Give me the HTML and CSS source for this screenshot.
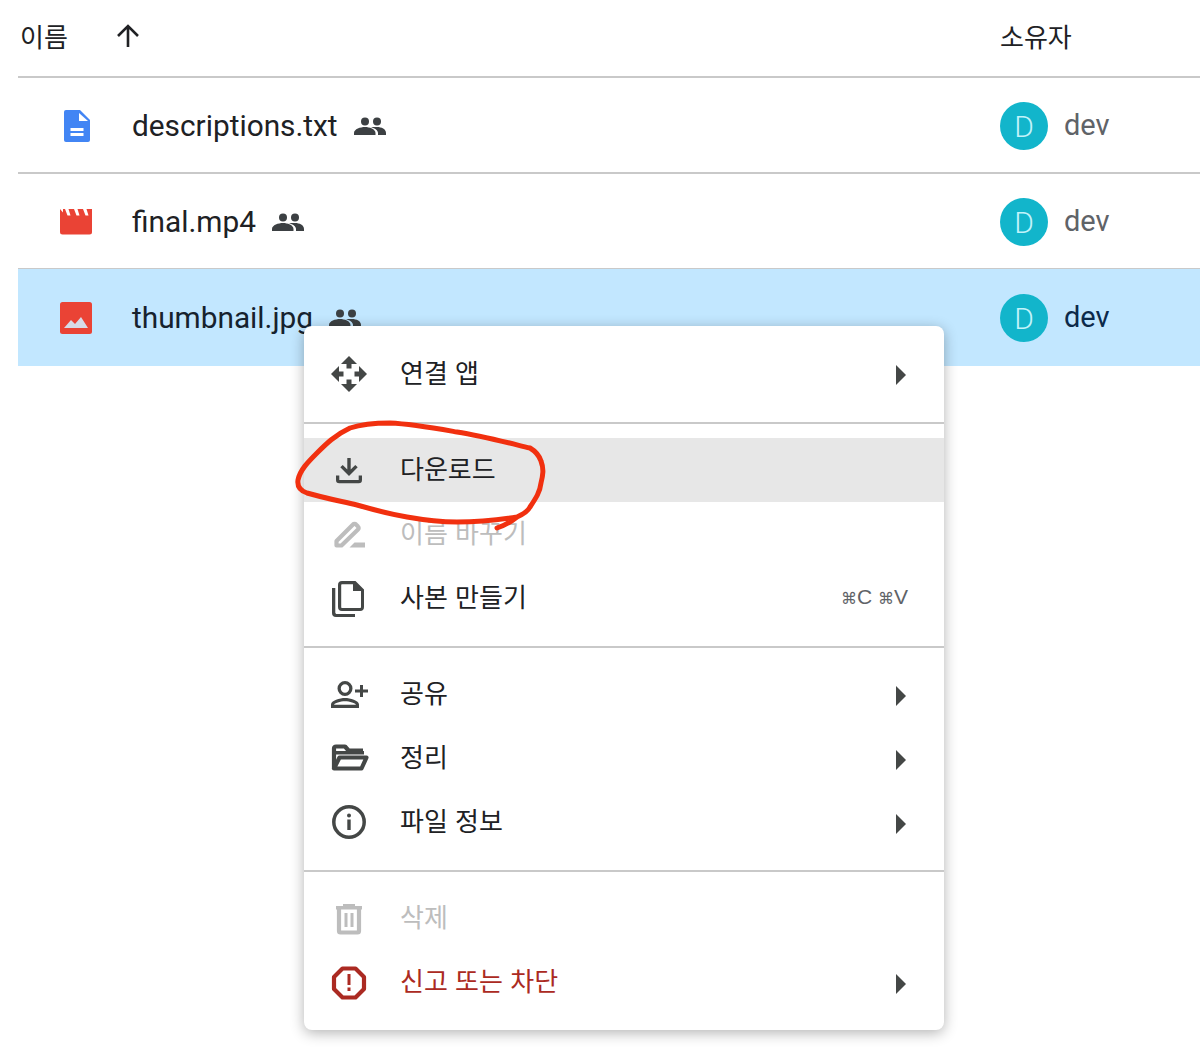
FILE: index.html
```html
<!DOCTYPE html>
<html lang="ko">
<head>
<meta charset="utf-8">
<title>Drive</title>
<link rel="stylesheet" href="styles.css">
</head>
<body>
<div class="page">
  <div class="list">
    <div class="head">
      <div class="col-name">
        <span class="head-label">이름</span>
        <svg class="sort" viewBox="0 0 24 24"><path d="M12 23V2M2 12 12 2l10 10"/></svg>
      </div>
      <div class="col-owner head-owner">소유자</div>
    </div>

    <div class="row">
      <div class="col-name">
        <span class="file-icon">
          <svg viewBox="0 0 32 32" width="32" height="32"><path class="blue" d="M6 0h14l10 10v20a2 2 0 0 1-2 2H6a2 2 0 0 1-2-2V2a2 2 0 0 1 2-2z"/><path class="cut" d="M19 3v8h9zM10.500 18h13v3h-13zM10.500 23h13v3h-13z"/></svg>
        </span>
        <span class="file-name">descriptions.txt</span>
        <svg class="people" viewBox="0 0 32 18"><circle cx="11" cy="4.500" r="4"/><circle cx="23" cy="4.500" r="4"/><path d="M0 18v-2c0-4 6.500-6 11-6s10.500 2 10.500 6v2zM17 10.300c1.800-.3 4-.4 6-.3 4.500 0 9 2 9 6v2h-8v-2c0-2.500-3-4.700-7-5.700z"/></svg>
      </div>
      <div class="col-owner owner"><span class="avatar">D</span><span class="owner-name">dev</span></div>
    </div>

    <div class="row">
      <div class="col-name">
        <span class="file-icon">
          <svg viewBox="0 0 32 26" width="32" height="26"><path class="red" d="M0 0h32v23a2.500 2.500 0 0 1-2.500 2.500h-27A2.500 2.500 0 0 1 0 23z"/><path class="cut" d="M0 0h3v3.500zM5 0h3.500l2 6.500h-3zM14 0h3.500l2 6.500h-3zM23 0h3.500l2 6.500h-3z"/></svg>
        </span>
        <span class="file-name">final.mp4</span>
        <svg class="people" viewBox="0 0 32 18"><circle cx="11" cy="4.500" r="4"/><circle cx="23" cy="4.500" r="4"/><path d="M0 18v-2c0-4 6.500-6 11-6s10.500 2 10.500 6v2zM17 10.300c1.800-.3 4-.4 6-.3 4.500 0 9 2 9 6v2h-8v-2c0-2.500-3-4.700-7-5.700z"/></svg>
      </div>
      <div class="col-owner owner"><span class="avatar">D</span><span class="owner-name">dev</span></div>
    </div>

    <div class="row selected">
      <div class="col-name">
        <span class="file-icon">
          <svg viewBox="0 0 32 32" width="32" height="32"><rect class="red" width="32" height="32" rx="2.500"/><path class="mountain" d="M4 26l7-8 4 4 6-7 7 11z"/></svg>
        </span>
        <span class="file-name">thumbnail.jpg</span>
        <svg class="people" viewBox="0 0 32 18"><circle cx="11" cy="4.500" r="4"/><circle cx="23" cy="4.500" r="4"/><path d="M0 18v-2c0-4 6.500-6 11-6s10.500 2 10.500 6v2zM17 10.300c1.800-.3 4-.4 6-.3 4.500 0 9 2 9 6v2h-8v-2c0-2.500-3-4.700-7-5.700z"/></svg>
      </div>
      <div class="col-owner owner"><span class="avatar">D</span><span class="owner-name">dev</span></div>
    </div>
  </div>

  <div class="menu">
    <div class="group first">
      <div class="item">
        <svg class="icon" viewBox="0 0 40 40"><path d="M20 3l8 8h-5.500v4.500h-5V11H12zM20 39l-8-8h5.500v-4.500h5V31H28zM2 21l8-8v5.500h4.500v5H10V29zM38 21l-8 8v-5.500h-4.500v-5H30V13z"/></svg>
        <span class="label top">연결 앱</span>
        <span class="caret"></span>
      </div>
    </div>
    <div class="group">
      <div class="item hover">
        <svg class="icon" viewBox="0 0 40 40"><path d="M18.300 8h3.400v11.500l4.600-4.600 2.400 2.400L20 26l-8.700-8.700 2.400-2.400 4.600 4.600z"/><path d="M7 25.500h3.300V30h19.400v-4.500H33V30a3.300 3.300 0 0 1-3.300 3.300H10.300A3.300 3.300 0 0 1 7 30z"/></svg>
        <span class="label">다운로드</span>
      </div>
      <div class="item disabled">
        <svg class="icon" viewBox="0 0 40 40"><path class="line thick" d="M7.500 31.500v-4.500L24 10.500a2 2 0 0 1 3 0l2 2a2 2 0 0 1 0 3L12.500 31.500z"/><path d="M20.500 33.500l5-5H36v5z"/></svg>
        <span class="label">이름 바꾸기</span>
      </div>
      <div class="item">
        <svg class="icon" viewBox="0 0 40 40"><path d="M3 10h3.300v24.500c0 .8.700 1.500 1.500 1.500H26v3H7a4 4 0 0 1-4-4z"/><path fill-rule="evenodd" d="M13 3h13.500L35 11.500V29a4 4 0 0 1-4 4H13a4 4 0 0 1-4-4V7a4 4 0 0 1 4-4zm0 3.200a.8.800 0 0 0-.8.800v22c0 .6.400 1 1 1H31c.6 0 1-.4 1-1V13h-8V6.200z"/></svg>
        <span class="label">사본 만들기</span>
        <span class="shortcut"><span class="cmd">⌘</span>C <span class="cmd">⌘</span>V</span>
      </div>
    </div>
    <div class="group">
      <div class="item">
        <svg class="icon" viewBox="0 0 40 40"><path fill-rule="evenodd" d="M16 7a7.500 7.500 0 1 1 0 15 7.500 7.500 0 0 1 0-15zm0 3.300a4.200 4.200 0 1 0 0 8.400 4.200 4.200 0 0 0 0-8.400zM16 24c5 0 14 2.500 14 6.500V34H2v-3.500C2 26.500 11 24 16 24zm0 3.200c-4.500 0-10.800 2-10.800 3.300v.3h21.600v-.3c0-1.300-6.300-3.300-10.800-3.300z"/><path d="M31 11h3v4.500h5v3h-5V23h-3v-4.500h-5v-3h5z"/></svg>
        <span class="label">공유</span>
        <span class="caret"></span>
      </div>
      <div class="item">
        <svg class="icon" viewBox="0 0 40 40"><path d="M5 13h30v3.500H5z"/><path class="line thick" d="M5 31V10.500a2 2 0 0 1 2-2h9l3.500 4H34"/><path class="line thick" d="M10.500 19.500H37.500L32.500 30.500H5z"/></svg>
        <span class="label">정리</span>
        <span class="caret"></span>
      </div>
      <div class="item">
        <svg class="icon" viewBox="0 0 40 40"><circle class="line" cx="20" cy="20" r="15.200"/><circle cx="20" cy="13.500" r="2"/><path d="M18.300 17.500h3.400V28h-3.400z"/></svg>
        <span class="label">파일 정보</span>
        <span class="caret"></span>
      </div>
    </div>
    <div class="group last">
      <div class="item disabled">
        <svg class="icon" viewBox="0 0 40 40"><path d="M14 6h12v2h7v3.500H7V8h7z"/><path class="line thick" d="M10 11v22a1.500 1.500 0 0 0 1.500 1.500h17a1.500 1.500 0 0 0 1.500-1.500V11"/><path d="M15.500 15h3v14h-3zM21.500 15h3v14h-3z"/></svg>
        <span class="label">삭제</span>
      </div>
      <div class="item report">
        <svg class="icon" viewBox="0 0 40 40"><path class="line thick" d="M13.500 6.500h13L35 15v12l-8.500 8.500h-13L5 27V15z"/><path d="M18.500 12h3v11h-3zM18.500 25.500h3V29h-3z"/></svg>
        <span class="label">신고 또는 차단</span>
        <span class="caret"></span>
      </div>
    </div>
  </div>

  <svg class="scribble" viewBox="0 0 1200 1064"><path d="M497 528C506 525 512 521 517 517C524 514 528 511 530 507C536 498 540 492 541 483C543 475 544 469 541 461C539 455 535 451 530 448C505 442 482 436 457 432C434 428 412 424 390 423C374 423 362 424 350 428C335 435 326 444 317 453C308 462 300 470 298 480C297 487 301 491 307 493C324 498 340 501 357 505C374 510 390 514 407 517C424 520 440 522 457 522C478 522 498 520 517 517"/></svg>
</div>
</body>
</html>
```
FILE: styles.css
```css
* { box-sizing: border-box; }
html, body { margin: 0; padding: 0; background: #fff; }
body { font-family: Roboto, "Noto Sans CJK KR", sans-serif; color: #202124; }
.page { position: relative; width: 1200px; height: 1064px; overflow: hidden; }
.list { margin-left: 18px; }
.head, .row { display: flex; align-items: center; border-bottom: 2px solid #c9c9c9; }
.head { height: 78px; padding-bottom: 4px; }
.row { height: 96px; padding-top: 2px; }
.row.selected { height: 97px; padding-top: 1px; border-bottom: 0; background: #c2e7ff; margin-top: -1px; color: #16222e; }
.col-name { width: 982px; display: flex; align-items: center; }
.col-owner { flex: 1; display: flex; align-items: center; }
.head-label, .head-owner { font-family: "Noto Sans CJK KR", sans-serif; font-size: 26px; line-height: 32px; }
.head-label { margin-left: 2px; width: 96px; }
.sort { width: 24px; height: 24px; }
.sort path { fill: none; stroke: #202124; stroke-width: 2.6; }
.file-icon { width: 32px; height: 32px; margin: 0 40px 0 42px; display: flex; align-items: center; }
.file-icon svg { display: block; }
.blue { fill: #4285f4; }
.red { fill: #ea4335; }
.cut { fill: #fff; }
.mountain { fill: #d7dbe8; }
.file-name { font-size: 29.800px; line-height: 36px; }
.people { width: 32px; height: 18px; margin-left: 16px; fill: #3c4043; }
.avatar { width: 48px; height: 48px; border-radius: 50%; background: #12b5cb; color: #c2f3fa; font-size: 30px; font-weight: 300; display: flex; align-items: center; justify-content: center; }
.owner-name { margin: -2px 0 0 16px; font-size: 29px; color: #5f6368; }
.selected .owner-name { color: #0c2a4a; }
.menu { position: absolute; left: 304px; top: 326px; width: 640px; height: 704px; background: #fff; border-radius: 8px; box-shadow: 0 3px 14px rgba(0,0,0,.3); font-family: "Noto Sans CJK KR", sans-serif; }
.group { padding: 14px 0 16px; border-bottom: 2px solid #c9c9c9; }
.group.first { padding: 15px 0 17px; }
.group.last { padding-bottom: 16px; border-bottom: 0; }
.item { height: 64px; display: flex; align-items: center; padding: 0 38px 0 25px; font-size: 26px; color: #202124; }
.item.hover { background: #e7e7e7; }
.icon { width: 40px; height: 40px; flex: none; fill: #444746; color: #444746; }
.line { fill: none; stroke: currentColor; stroke-width: 3.500; stroke-linejoin: round; }
.line.thick { stroke-width: 4.200; }
.label { margin-left: 31px; flex: 1; position: relative; top: -3px; }
.label.top { top: -2px; }
.caret { width: 0; height: 0; margin-top: 4px; border-left: 10px solid #444746; border-top: 10px solid transparent; border-bottom: 10px solid transparent; }
.shortcut { margin-right: -2px; position: relative; top: -1px; font-family: "Liberation Sans", sans-serif; font-size: 21px; color: #5f6368; }
.cmd { font-family: "DejaVu Sans", sans-serif; font-size: 16px; }
.disabled { color: #bdbdbd; }
.disabled .icon { fill: #bdbdbd; color: #bdbdbd; }
.report { color: #ab2a22; }
.report .icon { fill: #ab2a22; color: #ab2a22; }
.scribble { position: absolute; left: 0; top: 0; width: 1200px; height: 1064px; pointer-events: none; }
.scribble path { fill: none; stroke: #f1300f; stroke-width: 5; stroke-linecap: round; stroke-linejoin: round; }
```
